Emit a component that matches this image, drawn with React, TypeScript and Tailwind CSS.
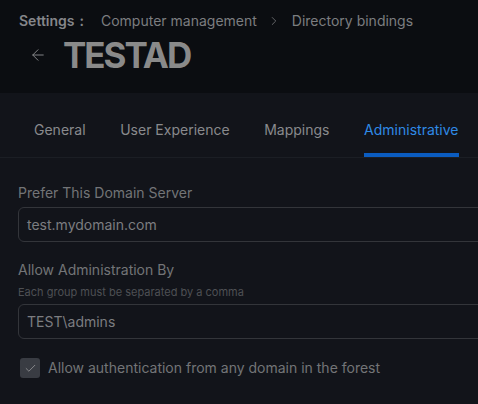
import { ArrowLeft, ChevronRight, Check } from "lucide-react";

const TABS = ["General", "User Experience", "Mappings", "Administrative"];

function Field({ label, help, value }: { label: string; help?: string; value: string }) {
  return (
    <div className="flex flex-col">
      <label className="text-[14px] leading-5 text-[#737477]">{label}</label>
      {help && <p className="mt-[5px] text-[11px] leading-[14px] text-[#4e5054]">{help}</p>}
      <div className={`${help ? "mt-[5px]" : "mt-[4px]"} flex h-[35px] w-[520px] items-center rounded-[6px] border border-[#33353a] px-[8px] text-[14px] text-[#7c7d80]`}>
        {value}
      </div>
    </div>
  );
}

export default function App() {
  const active = "Administrative";

  return (
    <div
      className="h-[404px] w-[478px] overflow-hidden bg-[#12141a]"
      style={{ fontFamily: "Inter, 'Noto Sans', sans-serif" }}
    >
      {/* Header */}
      <div className="h-[93px] bg-[#0b0d11] pl-[19px] pt-[11px]">
        <div className="flex items-center text-[14px] leading-5 text-[#7c7d80]">
          <span className="font-semibold text-[#85868a]">Settings</span>
          <span className="ml-[5px] font-semibold text-[#85868a]">:</span>
          <span className="ml-[17px]">Computer management</span>
          <ChevronRight size={14} strokeWidth={1.5} className="ml-[10px] text-[#6f7073]" />
          <span className="ml-[11px]">Directory bindings</span>
        </div>
        <div className="mt-[4px] flex h-[40px] items-center">
          <ArrowLeft size={18} strokeWidth={1.25} className="ml-[10px] text-[#8a8b8d]" />
          <h1 className="ml-[16px] text-[35px] font-bold leading-none tracking-[-2px] text-[#8a8a8a]">TESTAD</h1>
        </div>
      </div>

      {/* Tabs */}
      <div className="flex gap-[34.6px] border-b border-[#1b1e24] pl-[34px] pt-[27px]">
        {TABS.map((t) => (
          <div key={t} className="flex flex-col">
            <span
              className={`text-[14px] leading-5 ${t === active ? "text-[#2f8ae6]" : "text-[#898a8d]"}`}
            >
              {t}
            </span>
            <div className={`mt-[13px] h-[4px] ${t === active ? "bg-[#0b5cc0]" : ""}`} />
          </div>
        ))}
      </div>

      {/* Form */}
      <div className="flex flex-col pl-[18px] pt-[25px]">
        <Field label="Prefer This Domain Server" value="test.mydomain.com" />
        <div className="mt-[18px]">
          <Field label="Allow Administration By" help="Each group must be separated by a comma" value="TEST\admins" />
        </div>
        <div className="mt-[19px] flex items-center gap-[8px] pl-[2px]">
          <div className="flex h-[20px] w-[20px] items-center justify-center rounded-[3px] bg-[#393c43]">
            <Check size={13} strokeWidth={1.75} className="text-[#8a8b8e]" />
          </div>
          <span className="text-[14px] leading-5 text-[#737477]">Allow authentication from any domain in the forest</span>
        </div>
      </div>
    </div>
  );
}
